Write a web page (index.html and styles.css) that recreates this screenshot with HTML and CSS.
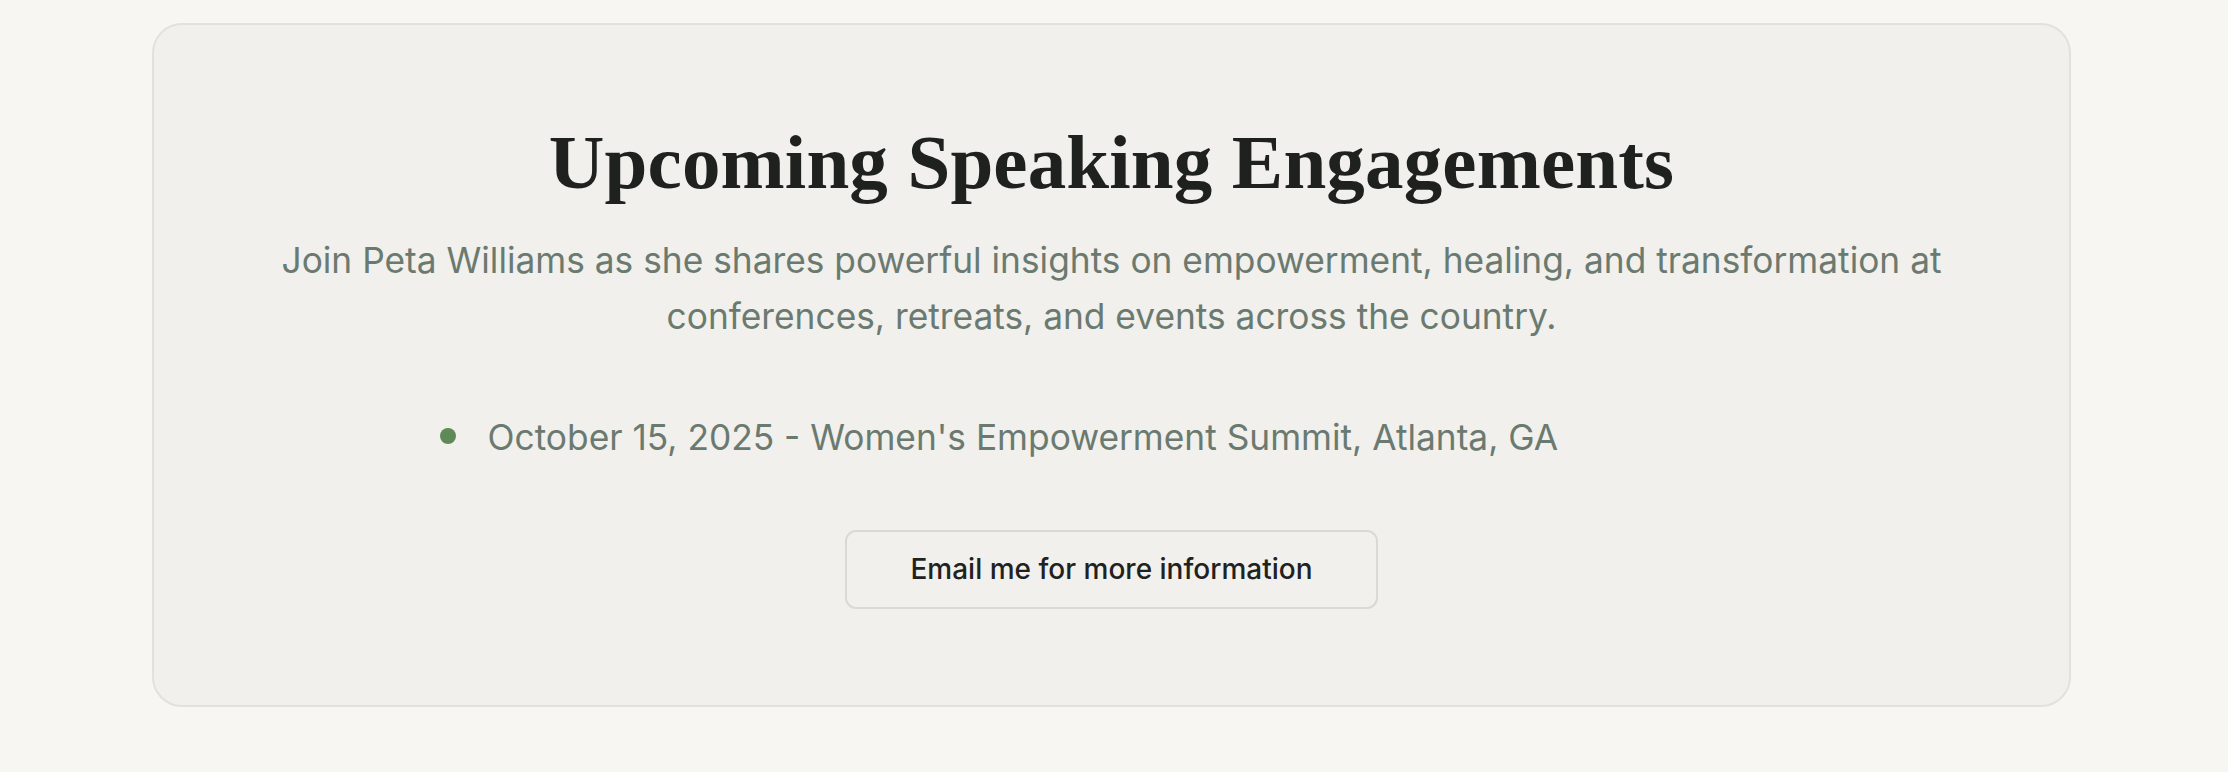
FILE: index.html
```html
<!DOCTYPE html>
<html lang="en">
<head>
<meta charset="utf-8">
<title>Upcoming Speaking Engagements</title>
<link rel="stylesheet" href="styles.css">
</head>
<body>
<main class="page">
  <section class="card">
    <h2 class="title">Upcoming Speaking Engagements</h2>
    <p class="lead">Join Peta Williams as she shares powerful insights on empowerment, healing, and transformation at conferences, retreats, and events across the country.</p>
    <ul class="events">
      <li class="event"><span class="dot"></span><span class="event-text">October 15, 2025 - Women's Empowerment Summit, Atlanta, GA</span></li>
    </ul>
    <div class="actions">
      <a class="btn" href="#">Email me for more information</a>
    </div>
  </section>
</main>
</body>
</html>
```

FILE: styles.css
```css
* { box-sizing: border-box; }
html, body { margin: 0; padding: 0; }
body {
  background: #f7f6f2;
  font-family: "Inter", "Liberation Sans", sans-serif;
}
.page {
  padding: 23px 5px 66px 0;
}
.card {
  width: 1919px;
  margin: 0 auto;
  background: #f1f0ec;
  border: 2px solid #e2e1dc;
  border-radius: 30px;
  padding: 92px 40px 96px;
  display: flex;
  flex-direction: column;
  align-items: center;
}
.title {
  margin: 0;
  font-family: "Liberation Serif", "Times New Roman", serif;
  font-weight: 700;
  font-size: 77px;
  line-height: 90px;
  color: #1e211e;
  text-align: center;
  letter-spacing: 0.15px;
}
.lead {
  margin: 26px 0 0;
  max-width: 1690px;
  font-size: 35.3px;
  line-height: 56px;
  color: #6b7a70;
  text-align: center;
}
.events {
  list-style: none;
  margin: 65px 0 0;
  padding: 0;
  width: 1344px;
}
.event {
  display: flex;
  align-items: center;
  gap: 32px;
  font-size: 35.3px;
  line-height: 56px;
  color: #6b7a70;
}
.dot {
  width: 16px;
  height: 16px;
  border-radius: 50%;
  background: #5f8a58;
  flex: none;
  margin-top: -5px;
}
.actions {
  margin-top: 64px;
}
.btn {
  display: inline-block;
  padding: 22px 63px;
  border: 2px solid #dad9d4;
  border-radius: 11px;
  font-size: 28px;
  line-height: 31px;
  font-weight: 500;
  color: #1f221f;
  text-decoration: none;
  background: transparent;
}
```
